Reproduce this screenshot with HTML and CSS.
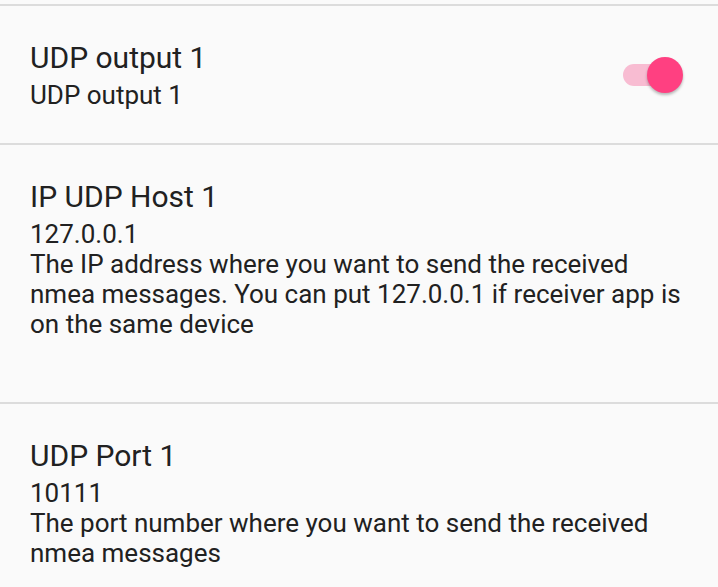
FILE: index.html
```html
<!DOCTYPE html>
<html lang="en">
<head>
    <meta charset="UTF-8">
    <meta name="viewport" content="width=device-width, initial-scale=1.0">
    <title>UDP settings</title>
    <link rel="stylesheet" href="styles.css">
</head>
<body>
    <div class="pref-list">
        <div class="pref-item">
            <div class="pref-text">
                <div class="pref-title">UDP output 1</div>
                <div class="pref-summary">UDP output 1</div>
            </div>
            <div class="switch on">
                <div class="switch-track"></div>
                <div class="switch-thumb"></div>
            </div>
        </div>

        <div class="pref-item pref-tall">
            <div class="pref-text">
                <div class="pref-title">IP UDP Host 1</div>
                <div class="pref-summary">127.0.0.1<br>The IP address where you want to send the received nmea messages. You can put 127.0.0.1 if receiver app is on the same device</div>
            </div>
        </div>

        <div class="pref-item">
            <div class="pref-text">
                <div class="pref-title">UDP Port 1</div>
                <div class="pref-summary">10111<br>The port number where you want to send the received nmea messages</div>
            </div>
        </div>
    </div>
</body>
</html>
```

FILE: styles.css
```css
* {
    margin: 0;
    padding: 0;
    box-sizing: border-box;
}

body {
    font-family: Roboto, 'Noto Sans', sans-serif;
    background: #fafafa;
    color: #212121;
    padding-top: 4px;
}

.pref-list {
    display: flex;
    flex-direction: column;
}

.pref-item {
    display: flex;
    align-items: center;
    gap: 20px;
    border-top: 2px solid #dcdcdc;
    padding: 34px 35px 33px 30px;
}

.pref-tall {
    padding-right: 28px;
    padding-bottom: 63px;
}

.pref-text {
    flex: 1;
    min-width: 0;
}

.pref-title {
    font-size: 30px;
    line-height: 35px;
}

.pref-summary {
    font-size: 26px;
    line-height: 30px;
    margin-top: 5px;
}

.switch {
    position: relative;
    width: 62px;
    height: 38px;
    flex-shrink: 0;
}

.switch-track {
    position: absolute;
    left: 2px;
    right: 2px;
    top: 8px;
    height: 22px;
    border-radius: 11px;
    background: #f8bcd2;
}

.switch-thumb {
    position: absolute;
    right: 0;
    top: 1px;
    width: 36px;
    height: 36px;
    border-radius: 50%;
    background: #ff4081;
    box-shadow: 0 2px 3px rgba(0, 0, 0, 0.28);
}
```
